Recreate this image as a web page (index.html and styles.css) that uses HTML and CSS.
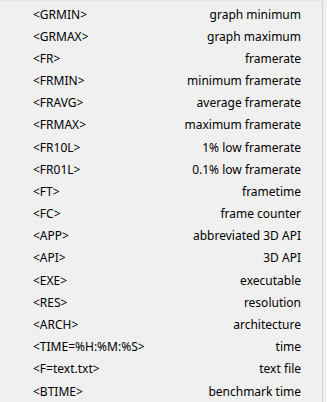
FILE: index.html
```html
<!DOCTYPE html>
<html>
<head>
<meta charset="utf-8">
<link rel="stylesheet" href="styles.css">
</head>
<body>
<div class="menu">
  <div class="row"><span class="tag">&lt;GRMIN&gt;</span><span class="desc">graph minimum</span></div>
  <div class="row"><span class="tag">&lt;GRMAX&gt;</span><span class="desc">graph maximum</span></div>
  <div class="row"><span class="tag">&lt;FR&gt;</span><span class="desc">framerate</span></div>
  <div class="row"><span class="tag">&lt;FRMIN&gt;</span><span class="desc">minimum framerate</span></div>
  <div class="row"><span class="tag">&lt;FRAVG&gt;</span><span class="desc">average framerate</span></div>
  <div class="row"><span class="tag">&lt;FRMAX&gt;</span><span class="desc">maximum framerate</span></div>
  <div class="row"><span class="tag">&lt;FR10L&gt;</span><span class="desc">1% low framerate</span></div>
  <div class="row"><span class="tag">&lt;FR01L&gt;</span><span class="desc">0.1% low framerate</span></div>
  <div class="row"><span class="tag">&lt;FT&gt;</span><span class="desc">frametime</span></div>
  <div class="row"><span class="tag">&lt;FC&gt;</span><span class="desc">frame counter</span></div>
  <div class="row"><span class="tag">&lt;APP&gt;</span><span class="desc">abbreviated 3D API</span></div>
  <div class="row"><span class="tag">&lt;API&gt;</span><span class="desc">3D API</span></div>
  <div class="row"><span class="tag">&lt;EXE&gt;</span><span class="desc">executable</span></div>
  <div class="row"><span class="tag">&lt;RES&gt;</span><span class="desc">resolution</span></div>
  <div class="row"><span class="tag">&lt;ARCH&gt;</span><span class="desc">architecture</span></div>
  <div class="row"><span class="tag">&lt;TIME=%H:%M:%S&gt;</span><span class="desc">time</span></div>
  <div class="row"><span class="tag">&lt;F=text.txt&gt;</span><span class="desc">text file</span></div>
  <div class="row"><span class="tag">&lt;BTIME&gt;</span><span class="desc">benchmark time</span></div>
</div>
</body>
</html>
```
FILE: styles.css
```css
html, body {
  margin: 0;
  padding: 0;
  background: #f0f0f0;
}
.menu {
  width: 323px;
  height: 402px;
  box-sizing: border-box;
  border-right: 1px solid #d4d4d4;
  border-top: 1px solid #e8e8e8;
  padding-top: 2px;
  background: #f0f0f0;
  font-family: "Noto Sans", "Open Sans", sans-serif;
  font-size: 12px;
  color: #000;
}
.row {
  display: flex;
  justify-content: space-between;
  align-items: center;
  height: 22.18px;
  padding-left: 33px;
  padding-right: 21px;
}
```
